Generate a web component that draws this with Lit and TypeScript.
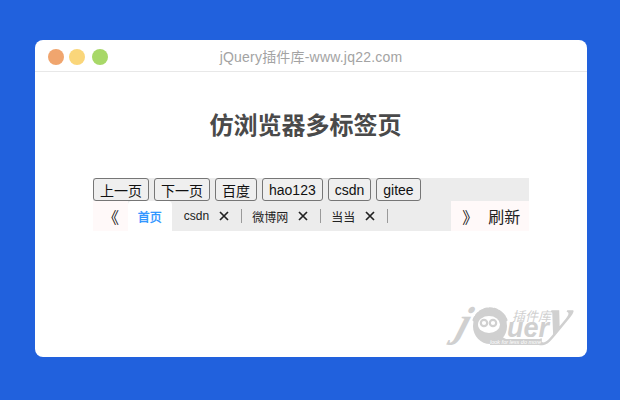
import { LitElement, html, css } from "lit";
import { customElement } from "lit/decorators.js";

@customElement("app-root")
export class AppRoot extends LitElement {
  static styles = css`
    :host {
      display: block;
      width: 620px;
      height: 400px;
      box-sizing: border-box;
      padding: 40px 33px 43px 35px;
      background: #2161dd;
      font-family: "Liberation Sans", "Noto Sans CJK SC", sans-serif;
      overflow: hidden;
    }
    .card {
      position: relative;
      height: 317px;
      background: #fff;
      border-radius: 8px;
      overflow: hidden;
    }
    .head {
      position: relative;
      height: 31px;
      border-bottom: 1px solid #e8e8e8;
      display: flex;
      align-items: center;
      justify-content: center;
      color: #a3a3a3;
      font-size: 14px;
      letter-spacing: 0.2px;
    }
    .dots {
      position: absolute;
      left: 13px;
      top: 9px;
      display: flex;
    }
    .dot {
      width: 16px;
      height: 16px;
      border-radius: 50%;
    }
    .dot.r { background: #f0a56e; margin-right: 5px; }
    .dot.y { background: #fad67a; margin-right: 7px; }
    .dot.g { background: #a8d868; }
    h1 {
      margin: 38px 0 0;
      padding-right: 11px;
      height: 32px;
      line-height: 32px;
      text-align: center;
      font-size: 24px;
      font-weight: 700;
      color: #4a4a4a;
    }
    .browser {
      margin: 36px 0 0 58px;
      width: 436px;
      background: #ececec;
    }
    .nav {
      display: flex;
      height: 23px;
      gap: 5px;
    }
    button {
      box-sizing: border-box;
      height: 23px;
      padding: 0 6px;
      border: 1px solid #767676;
      border-radius: 3px;
      background: #efefef;
      color: #111;
      font: 14px "Liberation Sans", "Noto Sans CJK SC", sans-serif;
    }
    .tabs {
      display: flex;
      height: 30px;
      font-size: 12px;
      color: #222;
    }
    .side {
      background: #fff9f9;
      display: flex;
      align-items: center;
      font-size: 16px;
      color: #222;
      box-sizing: border-box;
    }
    .side.l { width: 35px; padding-left: 10px; }
    .side.r { width: 78px; margin-left: 63px; padding-left: 11px; }
    .side .refresh { margin-left: 10px; }
    .tab {
      display: flex;
      align-items: center;
      white-space: nowrap;
      margin-left: 10px;
    }
    .tab.first { margin-left: 12px; }
    .tab.active {
      margin-left: 0;
      width: 44px;
      justify-content: center;
      background: #fff;
      color: #1e90ff;
      border-radius: 4px 4px 0 0;
      -webkit-text-stroke: 0.3px #1e90ff;
    }
    .x {
      margin-left: 10px;
      width: 10px;
      height: 10px;
      flex: none;
    }
    .x path { stroke: #222; stroke-width: 1.7; fill: none; }
    .sep {
      width: 1px;
      height: 14px;
      background: #9a9a9a;
      align-self: center;
      margin-left: 12px;
    }
    .mark {
      position: absolute;
      right: 9px;
      bottom: 7px;
      width: 130px;
      height: 52px;
      color: #d0d0d0;
    }
    .mark span { position: absolute; white-space: nowrap; }
    .mark svg { position: absolute; left: 0; top: 0; }
    .mark svg .solid { fill: #d0d0d0; }
    .mark svg .face { fill: #fff; }
    .mark svg .eye { fill: #fff; stroke: #d0d0d0; stroke-width: 2.2; }
    .mark svg .fuzz { fill: none; stroke: #d0d0d0; stroke-width: 3; stroke-dasharray: 3 2; stroke-linecap: round; }
    .mark .j { left: 11px; top: 3px; font: italic 700 42px/42px "Liberation Serif", serif; transform: skewX(-18deg); }
    .mark .uer { left: 59px; top: 15px; font: italic 700 27px/30px "Liberation Sans", sans-serif; }
    .mark .y { left: 101px; top: -7px; font: italic 700 52px/52px "Liberation Serif", serif; transform: skewX(-12deg); }
    .mark .cn { left: 64px; top: 11px; font: italic 13px/14px "Noto Sans CJK SC", sans-serif; }
    .mark .tag { left: 42px; top: 41px; font: italic 5.5px/6px "Liberation Sans", sans-serif; background: #d0d0d0; color: #fff; }
  `;

  private x() {
    return html`<svg class="x" viewBox="0 0 10 10"><path d="M1 1l8 8M9 1l-8 8"/></svg>`;
  }

  render() {
    return html`
      <div class="card">
        <div class="head">
          <div class="dots"><div class="dot r"></div><div class="dot y"></div><div class="dot g"></div></div>
          jQuery插件库-www.jq22.com
        </div>
        <h1>仿浏览器多标签页</h1>
        <div class="browser">
          <div class="nav">
            ${["上一页", "下一页", "百度", "hao123", "csdn", "gitee"].map((t) => html`<button>${t}</button>`)}
          </div>
          <div class="tabs">
            <div class="side l">《</div>
            <div class="tab active">首页</div>
            <div class="tab first">csdn${this.x()}</div>
            <div class="sep"></div>
            <div class="tab">微博网${this.x()}</div>
            <div class="sep"></div>
            <div class="tab">当当${this.x()}</div>
            <div class="sep"></div>
            <div class="side r">》<span class="refresh">刷新</span></div>
          </div>
        </div>
        <div class="mark">
          <span class="j">j</span>
          <svg width="70" height="52" viewBox="0 0 70 52">
            <ellipse class="solid" cx="42" cy="28" rx="17" ry="18"/>
            <path class="fuzz" d="M26 22a17 17 0 0 1 32 0"/>
            <path class="solid" d="M46 42l10 5 2-6-8-4z"/>
            <ellipse class="face" cx="41" cy="26.5" rx="11" ry="8.5"/>
            <circle class="eye" cx="36" cy="25" r="3.2"/>
            <circle class="eye" cx="45" cy="25" r="3.2"/>
          </svg>
          <span class="uer">uer</span>
          <span class="y">y</span>
          <span class="cn">插件库</span>
          <span class="tag">look for less do more</span>
        </div>
      </div>
    `;
  }
}
